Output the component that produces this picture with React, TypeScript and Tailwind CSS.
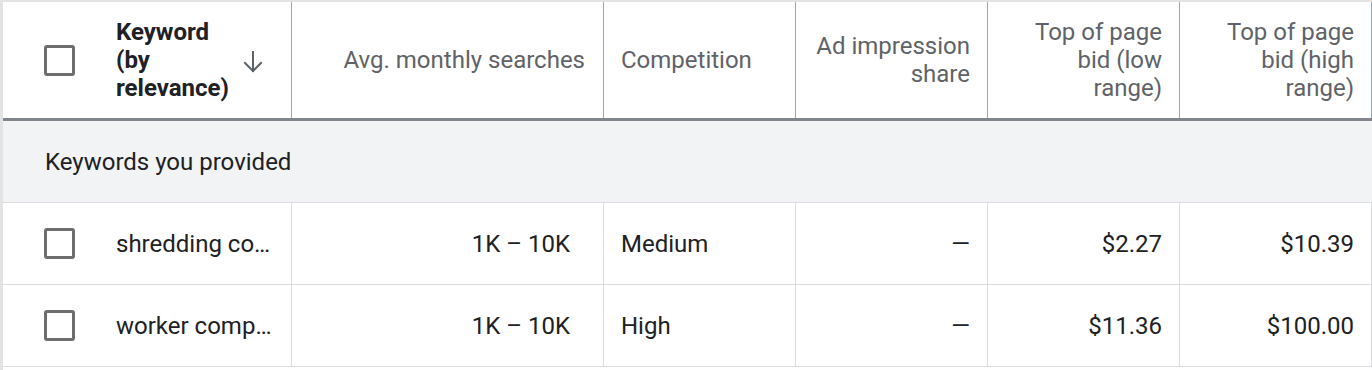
import React from 'react';

type Row = {
  keyword: string;
  searches: string;
  competition: string;
  share: string;
  low: string;
  high: string;
};

const rows: Row[] = [
  { keyword: 'shredding company near me', searches: '1K – 10K', competition: 'Medium', share: '—', low: '$2.27', high: '$10.39' },
  { keyword: 'worker compensation insurance', searches: '1K – 10K', competition: 'High', share: '—', low: '$11.36', high: '$100.00' },
];

function Checkbox() {
  return <div className="w-[31px] h-[31px] shrink-0 rounded-[3px] border-[3.5px] border-[#6e6e6e] bg-white" />;
}

// thin down arrow for the sort indicator
function SortArrow() {
  return (
    <svg width="22" height="24" viewBox="0 0 22 24" className="ml-[8px] mt-[4px] shrink-0" fill="none" stroke="#5f6368" strokeWidth="2" strokeLinecap="square">
      <path d="M11 2v19M3 13l8 8 8-8" />
    </svg>
  );
}

export default function App() {
  return (
    <div className="flex w-[1372px] h-[370px] bg-white font-['Roboto',_sans-serif] text-[24px] overflow-hidden">
      <div className="w-[3px] shrink-0 bg-[#e3e3e3]" />
      <div className="flex flex-col w-[1369px] border-t-2 border-[#e3e3e3]">
        {/* header */}
        <div className="flex h-[119px] border-b-[3px] border-[#80868b] text-[#5f6368] leading-[28px]">
          <div className="w-[289px] shrink-0 flex items-center border-r border-[#7baaf7] pl-[41px]">
            <Checkbox />
            <div className="ml-[41px] w-[118px] font-bold text-[#202124]">
              Keyword (by relevance)
            </div>
            <SortArrow />
          </div>
          <div className="w-[312px] shrink-0 flex items-center justify-end pr-[18px] border-r border-[#7baaf7]">
            Avg. monthly searches
          </div>
          <div className="w-[192px] shrink-0 flex items-center pl-[17px] border-r border-[#7baaf7]">
            Competition
          </div>
          <div className="w-[192px] shrink-0 flex items-center justify-end text-right pr-[17px] border-r border-[#7baaf7]">
            <span className="w-[160px]">Ad impression share</span>
          </div>
          <div className="w-[192px] shrink-0 flex items-center justify-end text-right pr-[17px] border-r border-[#7baaf7]">
            <span className="w-[135px]">Top of page bid (low range)</span>
          </div>
          <div className="w-[192px] shrink-0 flex items-center justify-end text-right pr-[17px] border-r border-[#7baaf7]">
            <span className="w-[135px]">Top of page bid (high range)</span>
          </div>
        </div>

        {/* group row */}
        <div className="h-[82px] shrink-0 flex items-center pl-[42px] bg-[#f1f3f4] border-b border-[#dadce0] text-[#202124]">
          Keywords you provided
        </div>

        {rows.map((r) => (
          <div key={r.keyword} className="flex h-[82px] shrink-0 border-b border-[#dadce0] text-[#202124]">
            <div className="w-[289px] shrink-0 flex items-center pl-[41px] pr-[18px] border-r border-[#dadce0]">
              <Checkbox />
              <span className="ml-[41px] truncate">{r.keyword}</span>
            </div>
            <div className="w-[312px] shrink-0 flex items-center justify-end pr-[33px] border-r border-[#dadce0]">
              {r.searches}
            </div>
            <div className="w-[192px] shrink-0 flex items-center pl-[17px] border-r border-[#dadce0]">
              {r.competition}
            </div>
            <div className="w-[192px] shrink-0 flex items-center justify-end pr-[17px] border-r border-[#dadce0]">
              {r.share}
            </div>
            <div className="w-[192px] shrink-0 flex items-center justify-end pr-[17px] border-r border-[#dadce0]">
              {r.low}
            </div>
            <div className="w-[192px] shrink-0 flex items-center justify-end pr-[17px] border-r border-[#dadce0]">
              {r.high}
            </div>
          </div>
        ))}
      </div>
    </div>
  );
}
